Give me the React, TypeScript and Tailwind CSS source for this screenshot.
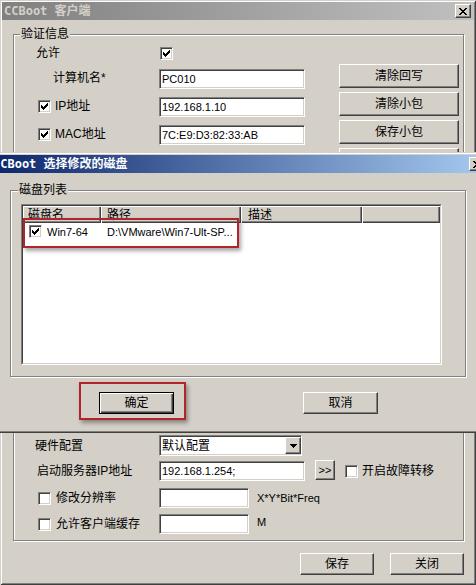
import React from "react";

const FONT = "font-['Liberation_Sans','Noto_Sans_CJK_SC',sans-serif]";
const SUNKEN =
  "bg-white border border-t-[#808080] border-l-[#808080] border-r-white border-b-white shadow-[inset_1px_1px_0_#404040,inset_-1px_-1px_0_#d4d0c8]";
const RAISED =
  "bg-[#d4d0c8] border border-t-white border-l-white border-r-[#404040] border-b-[#404040] shadow-[inset_-1px_-1px_0_#808080,inset_1px_1px_0_#d4d0c8]";
const ETCHED = "border border-[#808080] shadow-[inset_1px_1px_0_#fff,1px_1px_0_#fff]";

function Pixels({ rows, w, h }: { rows: string[]; w: number; h: number }) {
  return (
    <svg width={w} height={h} viewBox={`0 0 ${w} ${h}`} shapeRendering="crispEdges">
      {rows.flatMap((r, y) =>
        r.split("").map((c, x) => (c === "#" ? <rect key={`${x}-${y}`} x={x} y={y} width={1} height={1} fill="#000" /> : null))
      )}
    </svg>
  );
}

const CHECK = ["......#", ".....##", "#...###", "##.###.", "#####..", ".###...", "..#...."];
const XMARK = ["##....##", ".##..##.", "..####..", "...##...", "..####..", ".##..##.", "##....##"];
const ARROW = ["#######", ".#####.", "..###..", "...#..."];

function Check({ checked }: { checked?: boolean }) {
  return (
    <span className={`w-[13px] h-[13px] shrink-0 flex items-center justify-center ${SUNKEN}`}>
      {checked && <Pixels rows={CHECK} w={7} h={7} />}
    </span>
  );
}

function CloseBtn() {
  return (
    <span className={`w-[16px] h-[14px] shrink-0 flex items-center justify-center ${RAISED}`}>
      <Pixels rows={XMARK} w={8} h={7} />
    </span>
  );
}

function Field({ w, h = 20, text }: { w: number; h?: number; text?: string }) {
  return (
    <div
      className={`${SUNKEN} flex items-center pl-[2px] text-[11px] leading-[13px] font-['Liberation_Sans',sans-serif] text-black`}
      style={{ width: w, height: h }}
    >
      {text}
    </div>
  );
}

function Btn({ w, h, children }: { w: number; h: number; children?: React.ReactNode }) {
  return (
    <div className={`${RAISED} flex items-center justify-center text-[12px] leading-[14px] text-black`} style={{ width: w, height: h }}>
      {children}
    </div>
  );
}

function TopRow({ label, input, button }: { label: React.ReactNode; input: string; button: string }) {
  return (
    <div className="flex h-[24px] mt-[4px]">
      <div className="w-[145px] flex items-center pt-[4px]">{label}</div>
      <div className="w-[146px] pt-[5px]">
        <Field w={146} h={20} text={input} />
      </div>
      <div className="ml-[34px]">
        <Btn w={120} h={24}>{button}</Btn>
      </div>
    </div>
  );
}

export default function App() {
  return (
    <div
      className={`${FONT} relative w-[476px] h-[585px] overflow-hidden bg-[#d4d0c8] p-[2px] text-[12px] leading-[14px] text-black shadow-[inset_1px_1px_0_#d4d0c8,inset_-1px_-1px_0_#404040,inset_2px_2px_0_#fff,inset_-2px_-2px_0_#808080]`}
    >
      {/* main title bar (inactive) */}
      <div className="h-[18px] flex items-center bg-[linear-gradient(to_right,#808080,#c0c0c0)]">
        <span className="pl-[2px] font-bold text-[12px] text-[#d4d0c8] font-['DejaVu_Sans_Mono','Noto_Sans_CJK_SC',monospace]">
          CCBoot 客户端
        </span>
        <span className="ml-auto mr-[3px]">
          <CloseBtn />
        </span>
      </div>

      {/* main group box */}
      <div className={`relative ml-[11px] mt-[14px] w-[451px] pb-[6px] ${ETCHED}`}>
        <span className="absolute left-[6px] top-[-8px] px-[1px] bg-[#d4d0c8] leading-[14px]">验证信息</span>

        <div className="flex h-[14px] mt-[11px] items-center">
          <span className="w-[146px] pl-[22px]">允许</span>
          <Check checked />
        </div>

        <TopRow label={<span className="pl-[39px]">计算机名*</span>} input="PC010" button="清除回写" />
        <TopRow
          label={
            <span className="pl-[24px] flex items-center gap-[4px]">
              <Check checked />
              IP地址
            </span>
          }
          input="192.168.1.10"
          button="清除小包"
        />
        <TopRow
          label={
            <span className="pl-[24px] flex items-center gap-[4px]">
              <Check checked />
              MAC地址
            </span>
          }
          input="7C:E9:D3:82:33:AB"
          button="保存小包"
        />
        <div className="flex h-[24px] mt-[4px]">
          <div className="ml-[325px]">
            <Btn w={120} h={24} />
          </div>
        </div>

        <div className="h-[263px]" />

        <div className="flex h-[21px] items-center">
          <span className="w-[145px] pl-[21px]">硬件配置</span>
          <div className={`${SUNKEN} w-[143px] h-[21px] flex items-center pl-[2px]`}>
            <span className="text-[12px]">默认配置</span>
            <span className={`ml-auto w-[16px] h-[17px] flex items-center justify-center ${RAISED}`}>
              <Pixels rows={ARROW} w={7} h={4} />
            </span>
          </div>
        </div>

        <div className="flex h-[20px] mt-[5px] items-center">
          <span className="w-[145px] pl-[23px]">启动服务器IP地址</span>
          <Field w={146} h={20} text="192.168.1.254;" />
          <div className="ml-[10px] self-start -mt-[1px]">
            <Btn w={20} h={20}>
              <span className="text-[11px] font-['Liberation_Sans',sans-serif]">&gt;&gt;</span>
            </Btn>
          </div>
          <span className="ml-[10px]">
            <Check />
          </span>
          <span className="ml-[4px]">开启故障转移</span>
        </div>

        <div className="flex h-[20px] mt-[7px] items-center">
          <span className="w-[145px] pl-[24px] flex items-center gap-[5px]">
            <Check />
            修改分辨率
          </span>
          <Field w={90} h={20} />
          <span className="ml-[8px] text-[11px] font-['Liberation_Sans',sans-serif]">X*Y*Bit*Freq</span>
        </div>

        <div className="flex h-[20px] mt-[6px] items-center">
          <span className="w-[145px] pl-[24px] flex items-center gap-[5px]">
            <Check />
            允许客户端缓存
          </span>
          <Field w={90} h={20} />
          <span className="ml-[8px] text-[11px] font-['Liberation_Sans',sans-serif] -mt-[4px]">M</span>
        </div>
      </div>

      <div className="flex justify-end gap-[16px] mt-[12px] pr-[10px]">
        <Btn w={74} h={22}>保存</Btn>
        <Btn w={74} h={22}>关闭</Btn>
      </div>

      {/* modal dialog over the main window */}
      <div className="absolute left-[-14px] top-[152px] w-[504px] h-[281px] bg-[#d4d0c8] p-[3px] shadow-[inset_1px_1px_0_#d4d0c8,inset_-1px_-1px_0_#404040,inset_2px_2px_0_#fff,inset_-2px_-2px_0_#808080]">
        <div className="h-[18px] flex items-center bg-[linear-gradient(to_right,#0a246a,#a6caf0)]">
          <span className="pl-[4px] font-bold text-[12px] text-white font-['DejaVu_Sans_Mono','Noto_Sans_CJK_SC',monospace]">
            CCBoot 选择修改的磁盘
          </span>
          <span className="ml-auto mr-[2px]">
            <CloseBtn />
          </span>
        </div>

        <div className={`relative ml-[21px] mt-[17px] w-[456px] h-[187px] ${ETCHED}`}>
          <span className="absolute left-[7px] top-[-8px] px-[1px] bg-[#d4d0c8] leading-[14px]">磁盘列表</span>

          <div className="relative ml-[10px] mt-[13px] w-[421px] h-[161px] border border-t-[#808080] border-l-[#808080] border-r-white border-b-white">
            <div className="w-full h-full bg-white border border-t-[#404040] border-l-[#404040] border-r-[#d4d0c8] border-b-[#d4d0c8] flex flex-col">
              <div className="flex h-[17px] shrink-0">
                {[
                  { t: "磁盘名", w: 78, p: 5 },
                  { t: "路径", w: 140, p: 6 },
                  { t: "描述", w: 121, p: 7 },
                  { t: "", w: 78, p: 0 },
                ].map((c, i) => (
                  <div
                    key={i}
                    className="h-[17px] flex items-center bg-[#d4d0c8] shadow-[inset_1px_1px_0_#fff,inset_-1px_-1px_0_#404040,inset_-2px_-2px_0_#808080]"
                    style={{ width: c.w, paddingLeft: c.p }}
                  >
                    {c.t}
                  </div>
                ))}
              </div>
              <div className="flex h-[17px] items-center">
                <div className="w-[78px] flex items-center pl-[6px] gap-[5px]">
                  <Check checked />
                  <span className="text-[11px] font-['Liberation_Sans',sans-serif]">Win7-64</span>
                </div>
                <div className="pl-[6px] text-[11px] font-['Liberation_Sans',sans-serif] whitespace-nowrap">
                  {"D:\\VMware\\Win7-Ult-SP..."}
                </div>
              </div>
            </div>
            <span className="absolute left-[1px] top-[13px] w-[216px] h-[30px] border-2 border-[#b3232a] shadow-[2px_3px_4px_rgba(0,0,0,0.35)]" />
          </div>
        </div>

        <div className="flex mt-[15px] ml-[110px] gap-[129px]">
          <div className="relative">
            <div className="w-[75px] h-[22px] flex items-center justify-center bg-[#d4d0c8] border border-black shadow-[inset_1px_1px_0_#fff,inset_-1px_-1px_0_#404040,inset_-2px_-2px_0_#808080]">
              确定
            </div>
            <span className="absolute left-[-20px] top-[-10px] w-[107px] h-[38px] border-2 border-[#b3232a] shadow-[2px_3px_4px_rgba(0,0,0,0.35)]" />
          </div>
          <Btn w={75} h={22}>取消</Btn>
        </div>
      </div>
    </div>
  );
}
